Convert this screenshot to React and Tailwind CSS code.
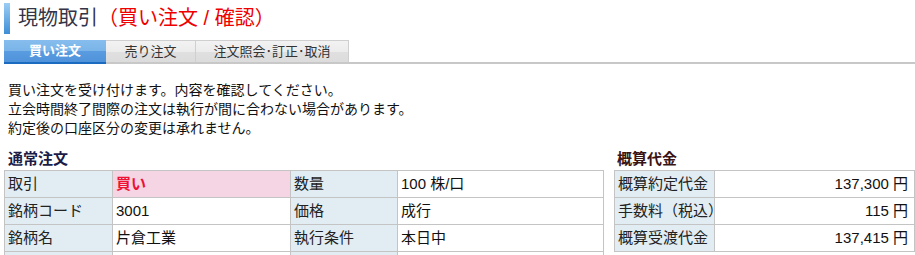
const fontStack = "font-['Liberation_Sans','Noto_Sans_CJK_JP',sans-serif]"

const orderRows = [
  ['取引', '買い', '数量', '100 株/口'],
  ['銘柄コード', '3001', '価格', '成行'],
  ['銘柄名', '片倉工業', '執行条件', '本日中'],
  ['', '', '', ''],
]

const costRows = [
  ['概算約定代金', '137,300 円'],
  ['手数料（税込）', '115 円'],
  ['概算受渡代金', '137,415 円'],
]

function Tab({ label, active, className = '' }) {
  if (active) {
    return (
      <div
        className={`-mb-[2px] flex h-[24px] items-center justify-center border-b-2 border-[#1b6cc0] bg-[linear-gradient(#86bdee_0%,#7ab4e8_50%,#5a9ce0_50%,#4f93db_100%)] text-[13px] font-bold text-white ${className}`}
      >
        {label}
      </div>
    )
  }

  return (
    <div
      className={`flex h-[22px] items-center justify-center border-t border-r border-[#cfcfcf] bg-[linear-gradient(#f2f2f2_0%,#ececec_50%,#e0e0e0_50%,#dcdcdc_100%)] text-[13px] text-[#333] ${className}`}
    >
      {label}
    </div>
  )
}

const labelCell =
  'border border-[#c4c4c4] bg-[#e1ecf3] px-[3px] text-left font-normal text-[#222]'
const valueCell = 'border border-[#c4c4c4] bg-white px-[3px] text-[#111]'

export default function App() {
  return (
    <div className={`h-[255px] w-[915px] overflow-hidden bg-white ${fontStack}`}>
      <div className="flex items-center pt-[3px] pl-[4px]">
        <div className="h-[31px] w-[6px] bg-[linear-gradient(#9ccdf4,#3e8ed6)]" />
        <h1 className="ml-[8px] text-[20px] leading-[31px] font-normal text-[#343446]">
          現物取引<span className="text-[#ee0000]">（買い注文 / 確認）</span>
        </h1>
      </div>

      <div className="mt-[6px] ml-[4px] flex border-b-2 border-[#c8c8c8]">
        <Tab label="買い注文" active className="w-[102px]" />
        <Tab label="売り注文" className="w-[90px]" />
        <Tab label="注文照会･訂正･取消" className="w-[153px]" />
      </div>

      <div className="mt-[17px] pl-[8px] text-[14px] leading-[19px] text-[#111]">
        <p>買い注文を受け付けます。内容を確認してください。</p>
        <p>立会時間終了間際の注文は執行が間に合わない場合があります。</p>
        <p>約定後の口座区分の変更は承れません。</p>
      </div>

      <div className="mt-[12px] flex gap-[11px] pl-[4px]">
        <section className="w-[599px]">
          <h2 className="pl-[4px] text-[15px] leading-[18px] font-bold text-[#1c1c48]">
            通常注文
          </h2>
          <table className="mt-[2px] w-full table-fixed border-collapse border-t border-t-[#9aa3cc] text-[15px]">
            <colgroup>
              <col className="w-[108px]" />
              <col className="w-[178px]" />
              <col className="w-[107px]" />
              <col className="w-[206px]" />
            </colgroup>
            <tbody>
              {orderRows.map((row, index) => (
                <tr key={index} className="h-[27px]">
                  <th className={labelCell}>{row[0]}</th>
                  <td
                    className={
                      index === 0
                        ? 'border border-[#c4c4c4] bg-[#f5d4e4] px-[3px] font-bold text-[#ee1133]'
                        : valueCell
                    }
                  >
                    {row[1]}
                  </td>
                  <th className={labelCell}>{row[2]}</th>
                  <td className={valueCell}>{row[3]}</td>
                </tr>
              ))}
            </tbody>
          </table>
        </section>

        <section className="w-[300px]">
          <h2 className="pl-[3px] text-[15px] leading-[18px] font-bold text-[#3a1414]">
            概算代金
          </h2>
          <table className="mt-[2px] w-full table-fixed border-collapse text-[15px]">
            <colgroup>
              <col className="w-[100px]" />
              <col className="w-[200px]" />
            </colgroup>
            <tbody>
              {costRows.map((row) => (
                <tr key={row[0]} className="h-[27px]">
                  <th className={`${labelCell} whitespace-nowrap`}>{row[0]}</th>
                  <td className={`${valueCell} pr-[6px] text-right`}>{row[1]}</td>
                </tr>
              ))}
            </tbody>
          </table>
        </section>
      </div>
    </div>
  )
}
